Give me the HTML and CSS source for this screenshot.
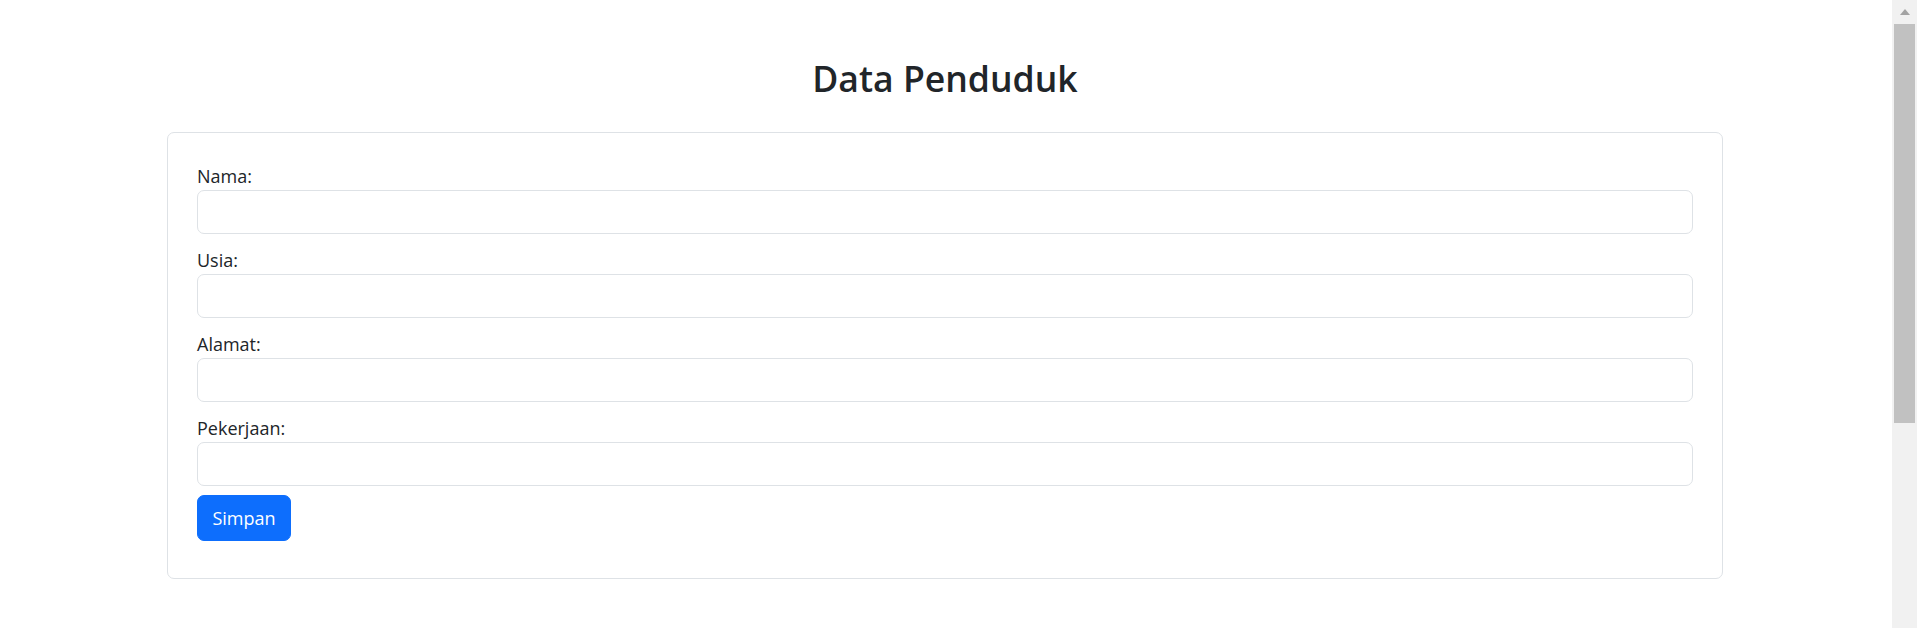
FILE: index.html
```html
<!DOCTYPE html>
<html lang="id">
<head>
<meta charset="utf-8">
<title>Data Penduduk</title>
<link rel="stylesheet" href="styles.css">
</head>
<body>
<div class="page">
  <h1 class="title">Data Penduduk</h1>
  <div class="card">
    <form class="form">
      <div class="field">
        <label class="label" for="nama">Nama:</label>
        <input class="input" id="nama" type="text">
      </div>
      <div class="field">
        <label class="label" for="usia">Usia:</label>
        <input class="input" id="usia" type="text">
      </div>
      <div class="field">
        <label class="label" for="alamat">Alamat:</label>
        <input class="input" id="alamat" type="text">
      </div>
      <div class="field">
        <label class="label" for="pekerjaan">Pekerjaan:</label>
        <input class="input" id="pekerjaan" type="text">
      </div>
      <button class="btn" type="button">Simpan</button>
    </form>
  </div>
</div>
<div class="scrollbar">
  <div class="arrow-up"></div>
  <div class="thumb"></div>
</div>
</body>
</html>
```

FILE: styles.css
```css
html, body {
  margin: 0;
  padding: 0;
  height: 100%;
}
body {
  display: flex;
  overflow: hidden;
  background: #fff;
  font-family: "Open Sans", "Noto Sans", "Liberation Sans", sans-serif;
  color: #212529;
}
.page {
  flex: 1;
  padding: 58px 2px 0 0;
  box-sizing: border-box;
}
.title {
  margin: 0 0 33px;
  text-align: center;
  font-size: 35.6px;
  line-height: 41px;
  font-weight: 600;
  color: #212529;
}
.card {
  width: 1556px;
  box-sizing: border-box;
  margin: 0 auto;
  border: 1px solid #dee2e6;
  border-radius: 7px;
  padding: 29px 29px 37px;
}
.form {
  display: flex;
  flex-direction: column;
}
.field {
  display: flex;
  flex-direction: column;
  margin-bottom: 12px;
}
.field:last-of-type {
  margin-bottom: 9px;
}
.label {
  font-size: 18px;
  line-height: 28px;
  color: #212529;
}
.input {
  height: 44px;
  box-sizing: border-box;
  border: 1px solid #dee2e6;
  border-radius: 7px;
  background: #fff;
  margin: 0;
  padding: 0 14px;
  font: inherit;
}
.btn {
  align-self: flex-start;
  height: 46px;
  width: 94px;
  box-sizing: border-box;
  border: 1px solid #0d6efd;
  border-radius: 7px;
  background: #0d6efd;
  color: #fff;
  font-family: inherit;
  font-size: 18px;
  line-height: 28px;
  padding: 0;
}
.scrollbar {
  width: 25px;
  flex: none;
  background: #f1f1f1;
  display: flex;
  flex-direction: column;
  align-items: center;
}
.arrow-up {
  width: 0;
  height: 0;
  margin-top: 9px;
  border-left: 5.5px solid transparent;
  border-right: 5.5px solid transparent;
  border-bottom: 6px solid #a3a3a3;
}
.thumb {
  margin-top: 9px;
  width: 21px;
  height: 399px;
  background: #c1c1c1;
}
```
